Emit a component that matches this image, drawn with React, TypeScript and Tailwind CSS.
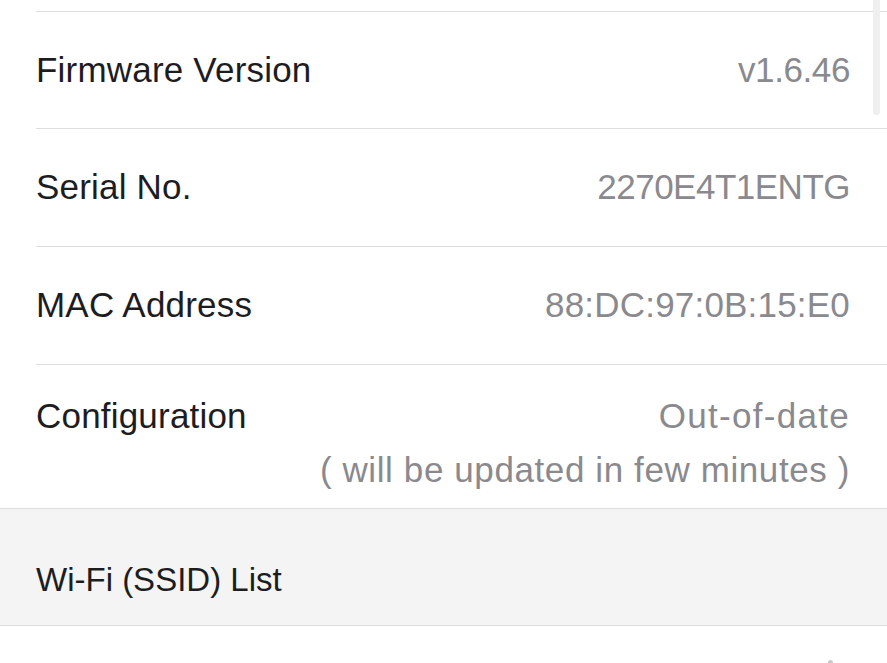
import React from "react";

const rows = [
  { label: "Firmware Version", value: "v1.6.46", h: "h-[117px]", vt: "tracking-[-0.4px]" },
  { label: "Serial No.", value: "2270E4T1ENTG", h: "h-[118px]", vt: "tracking-[-0.5px]" },
  { label: "MAC Address", value: "88:DC:97:0B:15:E0", h: "h-[118px]", vt: "tracking-[0.2px]" },
];

export default function App() {
  return (
    <div
      className="relative w-full h-[663px] overflow-hidden bg-white"
      style={{ fontFamily: '"Liberation Sans", Arial, sans-serif' }}
    >
      <div className="h-[11px]" />
      {rows.map((r) => (
        <div
          key={r.label}
          className={`ml-[36px] ${r.h} border-t-[1.5px] border-[#dedede] flex items-center justify-between pr-[37px] text-[35px]`}
        >
          <span className="text-[#1d1d1f] tracking-[0.2px]">{r.label}</span>
          <span className={`text-[#8a8a8e] ${r.vt}`}>{r.value}</span>
        </div>
      ))}
      <div className="ml-[36px] h-[144px] border-t-[1.5px] border-[#dedede] flex justify-between pr-[37px] pt-[24px] text-[35px] leading-[54px]">
        <span className="text-[#1d1d1f] tracking-[0.2px]">Configuration</span>
        <div className="flex flex-col items-end text-[#8a8a8e]">
          <span className="tracking-[1.3px]">Out-of-date</span>
          <span className="tracking-[0.6px]">( will be updated in few minutes )</span>
        </div>
      </div>
      <div className="h-[118px] bg-[#f4f4f4] border-y-[1.5px] border-[#dcdcdc] pl-[36px] pt-[52px] text-[33px] leading-[38px] text-[#1d1d1f]">
        Wi-Fi (SSID) List
      </div>
      <div className="relative h-[40px]">
        <div className="absolute left-[828px] top-[34px] w-[5px] h-[5px] rounded-full bg-[#c8c8c8]" />
      </div>
      <div className="absolute right-[7px] top-0 w-[7px] h-[115px] rounded-b-full bg-[#efefef]" />
    </div>
  );
}
